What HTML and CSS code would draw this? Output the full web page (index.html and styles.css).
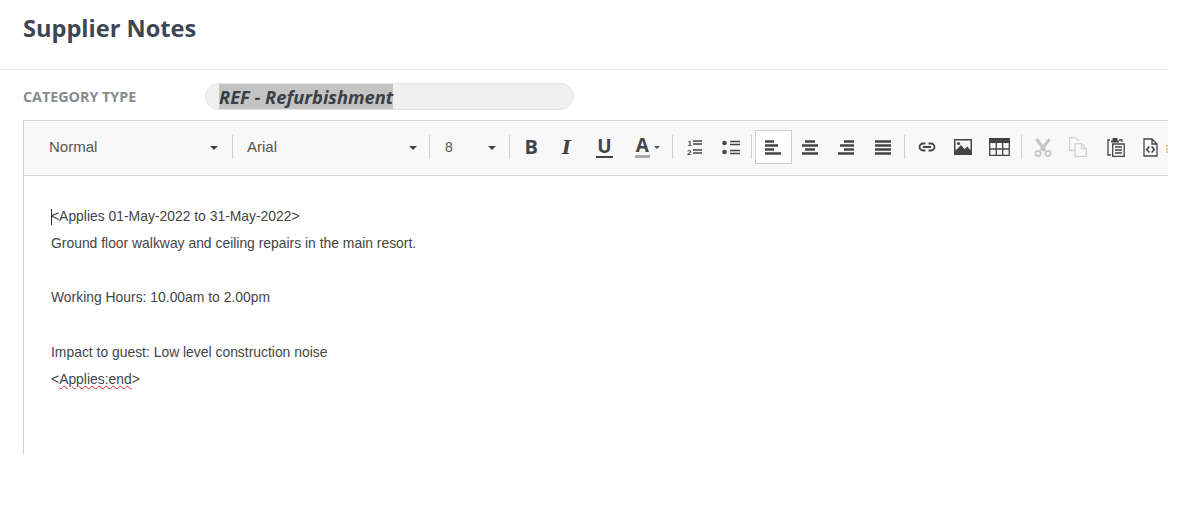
FILE: index.html
```html
<!DOCTYPE html>
<html lang="en">
<head>
<meta charset="utf-8">
<title>Supplier Notes</title>
<link rel="stylesheet" href="styles.css">
</head>
<body>
<main class="page">
  <header class="head"><h1 class="title">Supplier Notes</h1></header>
  <div class="field">
    <label class="field-label">CATEGORY TYPE</label>
    <div class="pill"><span class="pill-text">REF - Refurbishment</span></div>
  </div>
  <section class="editor">
    <div class="toolbar">
      <div class="combo combo-style"><span>Normal</span><i class="caret"></i></div>
      <b class="sep"></b>
      <div class="combo combo-font"><span>Arial</span><i class="caret"></i></div>
      <b class="sep"></b>
      <div class="combo combo-size"><span>8</span><i class="caret"></i></div>
      <b class="sep"></b>
      <div class="btn first"><span class="gl gl-b">B</span></div>
      <div class="btn"><span class="gl gl-i">I</span></div>
      <div class="btn"><span class="gl gl-u">U</span></div>
      <div class="btn btn-color"><span class="gl gl-a">A</span><i class="caret caret-sm"></i></div>
      <b class="sep sep-a"></b>
      <div class="btn">
        <svg width="15" height="17" viewBox="0 0 15 17"><text x="0.500" y="6.800" class="num">1</text><text x="0" y="16" class="num">2</text><path d="M6 2h9M6 5h9M6 11h9M6 14h9" class="ln"/></svg>
      </div>
      <div class="btn">
        <svg width="18" height="17" viewBox="0 0 18 17"><circle cx="2.500" cy="4" r="2.300" class="fill"/><circle cx="2.500" cy="13" r="2.300" class="fill"/><path d="M8 2.500h10M8 5.500h10M8 11.500h10M8 14.500h10" class="ln"/></svg>
      </div>
      <b class="sep sep-b"></b>
      <div class="btn active">
        <svg width="16" height="18" viewBox="0 0 16 18"><path d="M0 3.500h9M0 7.500h13M0 11.500h9M0 15.500h16" class="bar"/></svg>
      </div>
      <div class="btn">
        <svg width="16" height="18" viewBox="0 0 16 18"><path d="M3 3.500h10M0 7.500h16M3 11.500h10M0 15.500h16" class="bar"/></svg>
      </div>
      <div class="btn">
        <svg width="16" height="18" viewBox="0 0 16 18"><path d="M6 3.500h10M2 7.500h14M6 11.500h10M0 15.500h16" class="bar"/></svg>
      </div>
      <div class="btn">
        <svg width="16" height="18" viewBox="0 0 16 18"><path d="M0 3.500h16M0 7.500h16M0 11.500h16M0 15.500h16" class="bar"/></svg>
      </div>
      <b class="sep sep-c"></b>
      <div class="btn">
        <svg width="18" height="10" viewBox="0 0 18 10"><path d="M7.500 1.500H5a3.500 3.500 0 0 0 0 7h2.500M10.500 1.500H13a3.500 3.500 0 0 1 0 7h-2.500M5 5h8" class="link"/></svg>
      </div>
      <div class="btn">
        <svg width="18" height="16" viewBox="0 0 18 16"><path d="M0 0h18v16H0z" class="fill"/><path d="M1.500 1.500h15v10l-3-4-3 2.500-3.500-4-5.500 5.500z" fill="#f8f8f8"/><circle cx="4.500" cy="4.500" r="1.600" class="fill"/></svg>
      </div>
      <div class="btn">
        <svg width="21" height="18" viewBox="0 0 21 18"><path d="M0 0h21v5H0z" class="fill"/><path d="M.7 4v13.300h19.600V4M7.300 5v12M13.700 5v12M1 11h19" class="tbl"/></svg>
      </div>
      <b class="sep sep-d"></b>
      <div class="btn btn-cut">
        <svg width="18" height="19" viewBox="0 0 18 19"><path d="M2.500 1 11 12.500M15.500 1 7 12.500" class="cut"/><circle cx="4" cy="15.500" r="2.600" class="cut-o"/><circle cx="14" cy="15.500" r="2.600" class="cut-o"/></svg>
      </div>
      <div class="btn btn-copy">
        <svg width="18" height="20" viewBox="0 0 18 20"><path d="M6 13.500H.7V.7h6l3.500 3.500M6 6.700h6.500l4.800 4.800v7.800H6zM12.500 6.700v4.800h4.800" class="copy"/></svg>
      </div>
      <div class="btn btn-paste">
        <svg width="18" height="20" viewBox="0 0 18 20"><path d="M3 3H1v15h3M12 3h3v2" class="paste"/><path d="M4 3.500h1.500V1h5v2.500H12v2H4z" class="fill"/><path d="M5.700 7h11.500v12.300H5.700zM8 10h7M8 13h7M8 16h7" class="paste"/></svg>
      </div>
      <div class="btn btn-source">
        <svg width="15" height="19" viewBox="0 0 15 19"><path d="M1 1h8l5 5v12H1zM9 1v5h5" class="paste"/><path d="M6.300 8.500 3.800 11.500l2.500 3M8.700 8.500l2.500 3-2.500 3" class="code"/></svg>
      </div>
      <i class="more"></i>
    </div>
    <div class="content">
      <p><i class="cursor"></i>&lt;Applies 01-May-2022 to 31-May-2022&gt;</p>
      <p>Ground floor walkway and ceiling repairs in the main resort.</p>
      <p>&nbsp;</p>
      <p>Working Hours: 10.00am to 2.00pm</p>
      <p>&nbsp;</p>
      <p>Impact to guest: Low level construction noise</p>
      <p>&lt;<span class="spell">Applies:end</span>&gt;</p>
    </div>
  </section>
</main>
</body>
</html>
```

FILE: styles.css
```css
* { box-sizing: border-box; }
html, body { margin: 0; background: #fff; }
.page { width: 1168px; height: 454px; overflow: hidden; }
.head { height: 70px; border-bottom: 1px solid #e3e4ec; padding: 13px 0 0 23px; }
.title { margin: 0; font: 700 23.600px/30px "Open Sans", sans-serif; color: #3d4655; }
.field { display: flex; align-items: center; height: 27px; margin-top: 13px; padding-left: 23px; }
.field-label { width: 182px; font: 700 14.300px/18px "Open Sans", sans-serif; color: #858b92; padding-top: 1px; }
.pill { width: 369px; height: 27px; border: 1px solid #e4e4e4; border-radius: 14px; background: #f0f0f0; padding-left: 13px; }
.pill-text { display: inline-block; height: 25px; background: #c4c4c4; font: italic 700 18.300px/26px "Open Sans", sans-serif; color: #3a3f47; vertical-align: top; }
.editor { margin: 10px 0 0 23px; height: 334px; border-left: 1px solid #d1d1d1; border-top: 1px solid #d1d1d1; }
.toolbar { display: flex; align-items: center; height: 55px; padding-bottom: 2px; background: #f8f8f8; border-bottom: 1px solid #d1d1d1; position: relative; overflow: hidden; }
.combo { flex: none; display: flex; align-items: center; justify-content: space-between; height: 24px; font: 15px/24px "Liberation Sans", sans-serif; color: #555; }
.combo-style { width: 208px; padding: 0 14px 0 25px; }
.combo-font { width: 196px; padding: 0 12px 0 14px; }
.combo-size { width: 79px; padding: 0 13px 0 15px; font-size: 14px; }
.caret { width: 0; height: 0; border: 4px solid transparent; border-top-color: #444; border-bottom: 0; margin-top: 2px; }
.caret-sm { border-width: 3.500px; border-bottom: 0; border-top-color: #555; margin-left: 4px; margin-top: 0; }
.sep { flex: none; width: 1px; height: 24px; background: #d0d0d0; }
.sep-a { margin: 0 3px 0 1px; }
.sep-b { margin: 0 3px 0 2px; }
.sep-c { margin: 0 3px 0 3px; }
.sep-d { margin: 0 3px 0 3px; }
.btn { flex: none; display: flex; align-items: center; justify-content: center; width: 36.600px; height: 34px; border: 1px solid transparent; color: #444; }
.btn.first { margin-left: 3px; }
.btn.active { background: #fff; border-color: #cfcfcf; }
.btn-color { width: 48px; padding-left: 1px; }
.btn-cut { margin-right: -2px; }
.btn-copy { margin-right: 1.500px; }
.btn-paste { margin-right: -2px; }
.gl { display: block; line-height: 1; }
.gl-b { font: 700 20px/22px "Open Sans", sans-serif; }
.gl-i { font: italic 700 19px/22px "DejaVu Serif", serif; margin-right: 3px; }
.gl-u { font: 700 19px/19px "Open Sans", sans-serif; border-bottom: 2px solid #444; padding: 0 1px; }
.gl-a { font: 700 19px/19px "Open Sans", sans-serif; border-bottom: 3px solid #aaa; padding: 0 1px; }
.num { font: 700 8px "Liberation Sans", sans-serif; fill: #444; }
.ln { stroke: #444; stroke-width: 1.500; fill: none; }
.bar { stroke: #444; stroke-width: 2.500; fill: none; }
.fill { fill: #444; }
.link { stroke: #444; stroke-width: 1.800; fill: none; }
.tbl { stroke: #444; stroke-width: 1.300; fill: none; }
.cut { stroke: #c4c4c4; stroke-width: 3; fill: none; }
.cut-o { stroke: #c4c4c4; stroke-width: 1.600; fill: none; }
.copy { stroke: #d2d2d2; stroke-width: 1.300; fill: none; }
.paste { stroke: #444; stroke-width: 1.300; fill: none; }
.code { stroke: #444; stroke-width: 1.600; fill: none; }
.more { position: absolute; right: -2px; top: 24px; width: 4px; height: 8px; border-left: 2px dotted #e8c56a; }
.content { padding: 26.500px 0 0 27px; font: 13.900px/27.250px "Liberation Sans", sans-serif; color: #444; }
.content p { margin: 0; white-space: nowrap; position: relative; }
.cursor { position: absolute; left: 0; top: 6px; width: 1px; height: 16px; background: #333; }
.spell { text-decoration: underline wavy #e02020 1px; text-underline-offset: 1px; }
```
